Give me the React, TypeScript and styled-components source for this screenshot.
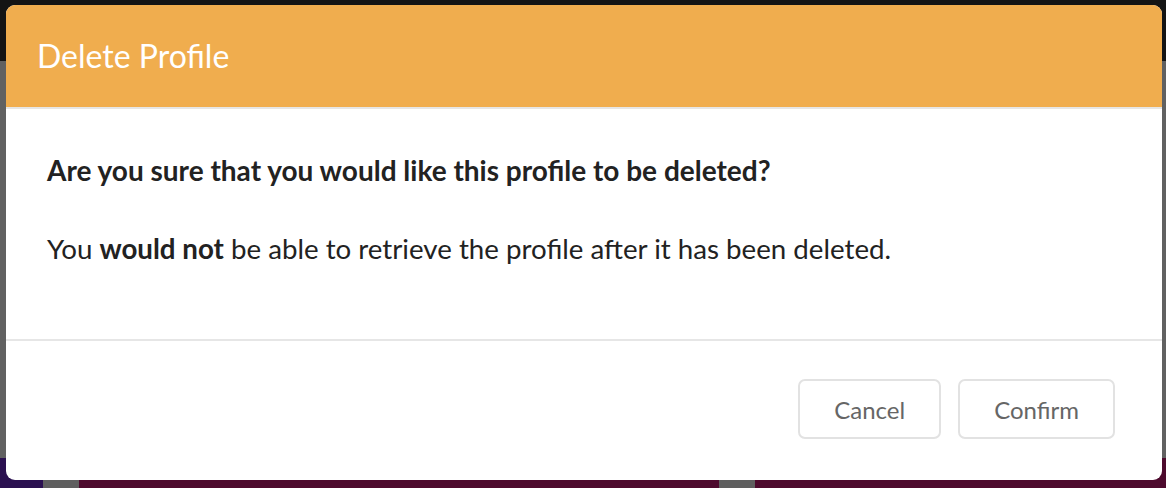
import React from "react";
import styled, { createGlobalStyle } from "styled-components";

const Global = createGlobalStyle`
  html, body { margin: 0; padding: 0; }
  body { font-family: Lato, "Open Sans", sans-serif; background: #616161; }
  * { box-sizing: border-box; }
`;

const Page = styled.div`
  position: relative;
  width: 1166px;
  height: 488px;
  overflow: hidden;
  display: flex;
  flex-direction: column;
  background: #616161;
`;

const TopBar = styled.div`
  height: 61px;
  background: #141414;
`;

const Middle = styled.div`
  flex: 1;
  background: #616161;
`;

const BottomBand = styled.div`
  height: 30px;
  display: flex;
`;

const BandBlock = styled.div<{ $w?: number; $c: string }>`
  ${(p) => (p.$w ? `width: ${p.$w}px;` : "flex: 1;")}
  background: ${(p) => p.$c};
`;

const Modal = styled.div`
  position: absolute;
  top: 5px;
  left: 6px;
  right: 4px;
  bottom: 8px;
  background: #fff;
  border-radius: 9px;
  overflow: hidden;
  display: flex;
  flex-direction: column;
`;

const Header = styled.div`
  height: 104px;
  background: #f0ad4e;
  border-bottom: 2px solid #e6e6e6;
  display: flex;
  align-items: center;
  padding: 0 31px 2px;
`;

const Title = styled.h2`
  margin: 0;
  font-family: Lato, sans-serif;
  font-weight: 400;
  font-size: 32px;
  color: #fff;
`;

const Body = styled.div`
  flex: 1;
  padding: 41px 41px 0;
  border-bottom: 2px solid #e6e6e6;
`;

const Para = styled.p<{ $strong?: boolean }>`
  margin: 0 0 39px;
  font-family: Lato, sans-serif;
  font-size: ${(p) => (p.$strong ? "28px" : "27.7px")};
  line-height: 40px;
  color: #222;
  font-weight: ${(p) => (p.$strong ? 700 : 400)};
`;

const Footer = styled.div`
  height: 139px;
  display: flex;
  justify-content: flex-end;
  align-items: flex-start;
  gap: 17px;
  padding: 38px 47px 0;
`;

const Button = styled.button`
  height: 60px;
  padding: 0 34px;
  background: #fff;
  border: 2px solid #e2e2e2;
  border-radius: 7px;
  font-family: Lato, sans-serif;
  font-size: 24px;
  color: #666;
  cursor: pointer;
`;

export default function App() {
  return (
    <>
      <Global />
      <Page>
        <TopBar />
        <Middle />
        <BottomBand>
          <BandBlock $w={43} $c="#2a1050" />
          <BandBlock $w={36} $c="#5f5f5f" />
          <BandBlock $w={640} $c="#4d0a2d" />
          <BandBlock $w={36} $c="#5f5f5f" />
          <BandBlock $c="#4d0a2d" />
        </BottomBand>
        <Modal>
          <Header>
            <Title>Delete Profile</Title>
          </Header>
          <Body>
            <Para $strong>Are you sure that you would like this profile to be deleted?</Para>
            <Para>
              You <strong>would not</strong> be able to retrieve the profile after it has been deleted.
            </Para>
          </Body>
          <Footer>
            <Button>Cancel</Button>
            <Button>Confirm</Button>
          </Footer>
        </Modal>
      </Page>
    </>
  );
}
